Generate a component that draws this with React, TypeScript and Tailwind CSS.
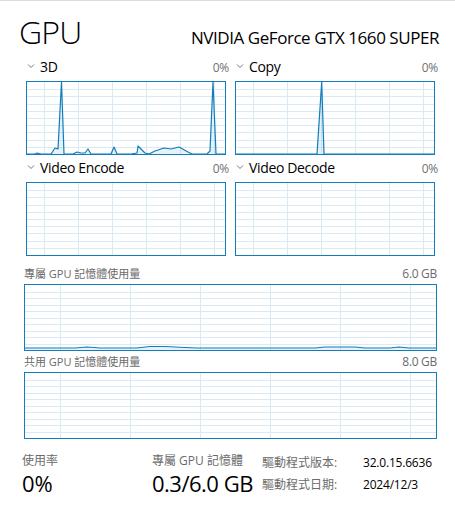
const FONT = '"Open Sans", "Noto Sans CJK TC", sans-serif';

type Pt = [number, number];

function Chart({
  w,
  h,
  colStep,
  colOffset,
  points,
}: {
  w: number;
  h: number;
  colStep: number;
  colOffset: number;
  points?: Pt[];
}) {
  const rows = Array.from({ length: 9 }, (_, i) => ((i + 1) * h) / 10);
  const cols: number[] = [];
  for (let x = colOffset; x < w; x += colStep) cols.push(x);
  const line = points ? points.map((p) => `${p[0]},${p[1]}`).join(" ") : "";
  const area = points ? `0,${h} ${line} ${w},${h}` : "";

  return (
    <div className="border border-[#117dbb] bg-white" style={{ height: h + 2 }}>
      <svg width="100%" height={h} viewBox={`0 0 ${w} ${h}`} preserveAspectRatio="none" className="block">
        {rows.map((y) => (
          <line key={"r" + y} x1={0} x2={w} y1={Math.round(y) + 0.5} y2={Math.round(y) + 0.5} stroke="#d9eaf4" strokeWidth={1} />
        ))}
        {cols.map((x) => (
          <line key={"c" + x} x1={Math.round(x) + 0.5} x2={Math.round(x) + 0.5} y1={0} y2={h} stroke="#d9eaf4" strokeWidth={1} />
        ))}
        {points && (
          <>
            <polygon points={area} fill="#117dbb" fillOpacity={0.1} />
            <polyline points={line} fill="none" stroke="#117dbb" strokeWidth={1.2} strokeLinejoin="round" />
          </>
        )}
      </svg>
    </div>
  );
}

function Chevron() {
  return (
    <svg width="8" height="6" viewBox="0 0 8 6" className="mr-[5px] mb-[3px]">
      <polyline points="1,1.5 4,4.5 7,1.5" fill="none" stroke="#777" strokeWidth="1" />
    </svg>
  );
}

function SmallChart({ title, points }: { title: string; points?: Pt[] }) {
  return (
    <div>
      <div className="flex items-end justify-between h-[27px] pb-[4px] pl-[1px] -mr-[3px]">
        <div className="flex items-center text-[14px] leading-[20px] tracking-[-0.35px] text-black">
          <Chevron />
          <span>{title}</span>
        </div>
        <span className="text-[12px] leading-[16px] tracking-[-0.3px] text-[#707070] mb-[1px]">0%</span>
      </div>
      <Chart w={198} h={72} colStep={34} colOffset={17} points={points} />
    </div>
  );
}

const GPU3D: Pt[] = [
  [0, 72], [8, 72], [10, 71], [14, 72], [24, 72], [28, 66], [31, 67], [34.5, 0], [37, 72],
  [46, 72], [50, 70], [54, 71], [58, 71], [61, 67], [64, 72], [84, 72], [87, 65], [90, 72],
  [104, 72], [110, 71], [111, 64], [115, 68], [118, 71], [122, 72], [128, 69], [137, 66],
  [144, 67], [152, 65], [161, 70], [165, 72], [180, 72], [183, 69], [186, 0], [189, 72], [198, 72],
];

const COPY: Pt[] = [
  [0, 72], [81, 72], [85.7, 0], [88, 72], [198, 72],
];

const DEDICATED: Pt[] = [
  [0, 63], [50, 63], [62, 62], [75, 63], [112, 63], [125, 61.5], [140, 61.5], [160, 62.5],
  [172, 63], [290, 63], [300, 62], [330, 62], [340, 63], [365, 63], [374, 62], [384, 63], [411, 63],
];

export default function App() {
  return (
    <div
      className="w-[455px] h-[520px] bg-white border-t border-[#dcdcdc] overflow-hidden"
      style={{ fontFamily: FONT }}
    >
      <div className="flex items-baseline justify-between h-[53px] pt-[11px] pl-[19px] pr-[16px]">
        <span className="text-[32px] leading-[40px] font-light tracking-[-0.8px] text-black">GPU</span>
        <span className="text-[17px] leading-[24px] tracking-[-0.45px] text-black">NVIDIA GeForce GTX 1660 SUPER</span>
      </div>

      <div className="grid grid-cols-2 gap-x-[9px] pl-[26px] pr-[20px]">
        <SmallChart title="3D" points={GPU3D} />
        <SmallChart title="Copy" points={COPY} />
        <SmallChart title="Video Encode" />
        <SmallChart title="Video Decode" />
      </div>

      <div className="pl-[24px] pr-[18px]">
        <div className="flex items-end justify-between h-[28px] pb-[2px] text-[11px] leading-[16px] text-[#6b6b6b]">
          <span>專屬 GPU 記憶體使用量</span>
          <span className="text-[12px] tracking-[-0.3px]">6.0 GB</span>
        </div>
        <Chart w={411} h={65} colStep={70} colOffset={35} points={DEDICATED} />
        <div className="flex items-end justify-between h-[21px] pb-[2px] text-[11px] leading-[16px] text-[#6b6b6b]">
          <span>共用 GPU 記憶體使用量</span>
          <span className="text-[12px] tracking-[-0.3px]">8.0 GB</span>
        </div>
        <Chart w={411} h={65} colStep={70} colOffset={35} />
      </div>

      <div className="flex pl-[22px] pt-[15px]">
        <div className="w-[130px] flex flex-col">
          <span className="text-[12px] leading-[14px] text-[#6b6b6b]">使用率</span>
          <span className="text-[22px] leading-[26px] mt-[2px] text-black">0%</span>
        </div>
        <div className="w-[110px] flex flex-col">
          <span className="text-[12px] leading-[14px] text-[#6b6b6b]">專屬 GPU 記憶體</span>
          <span className="text-[22px] leading-[26px] mt-[2px] tracking-[-0.5px] text-black">0.3/6.0 GB</span>
        </div>
        <div className="grid grid-cols-[101px_auto] gap-y-[4px] pt-[2px] text-[12px] leading-[14px]">
          <span className="text-[#6b6b6b]">驅動程式版本:</span>
          <span className="text-black tracking-[-0.2px]">32.0.15.6636</span>
          <span className="text-[#6b6b6b]">驅動程式日期:</span>
          <span className="text-black tracking-[-0.2px]">2024/12/3</span>
        </div>
      </div>
    </div>
  );
}
